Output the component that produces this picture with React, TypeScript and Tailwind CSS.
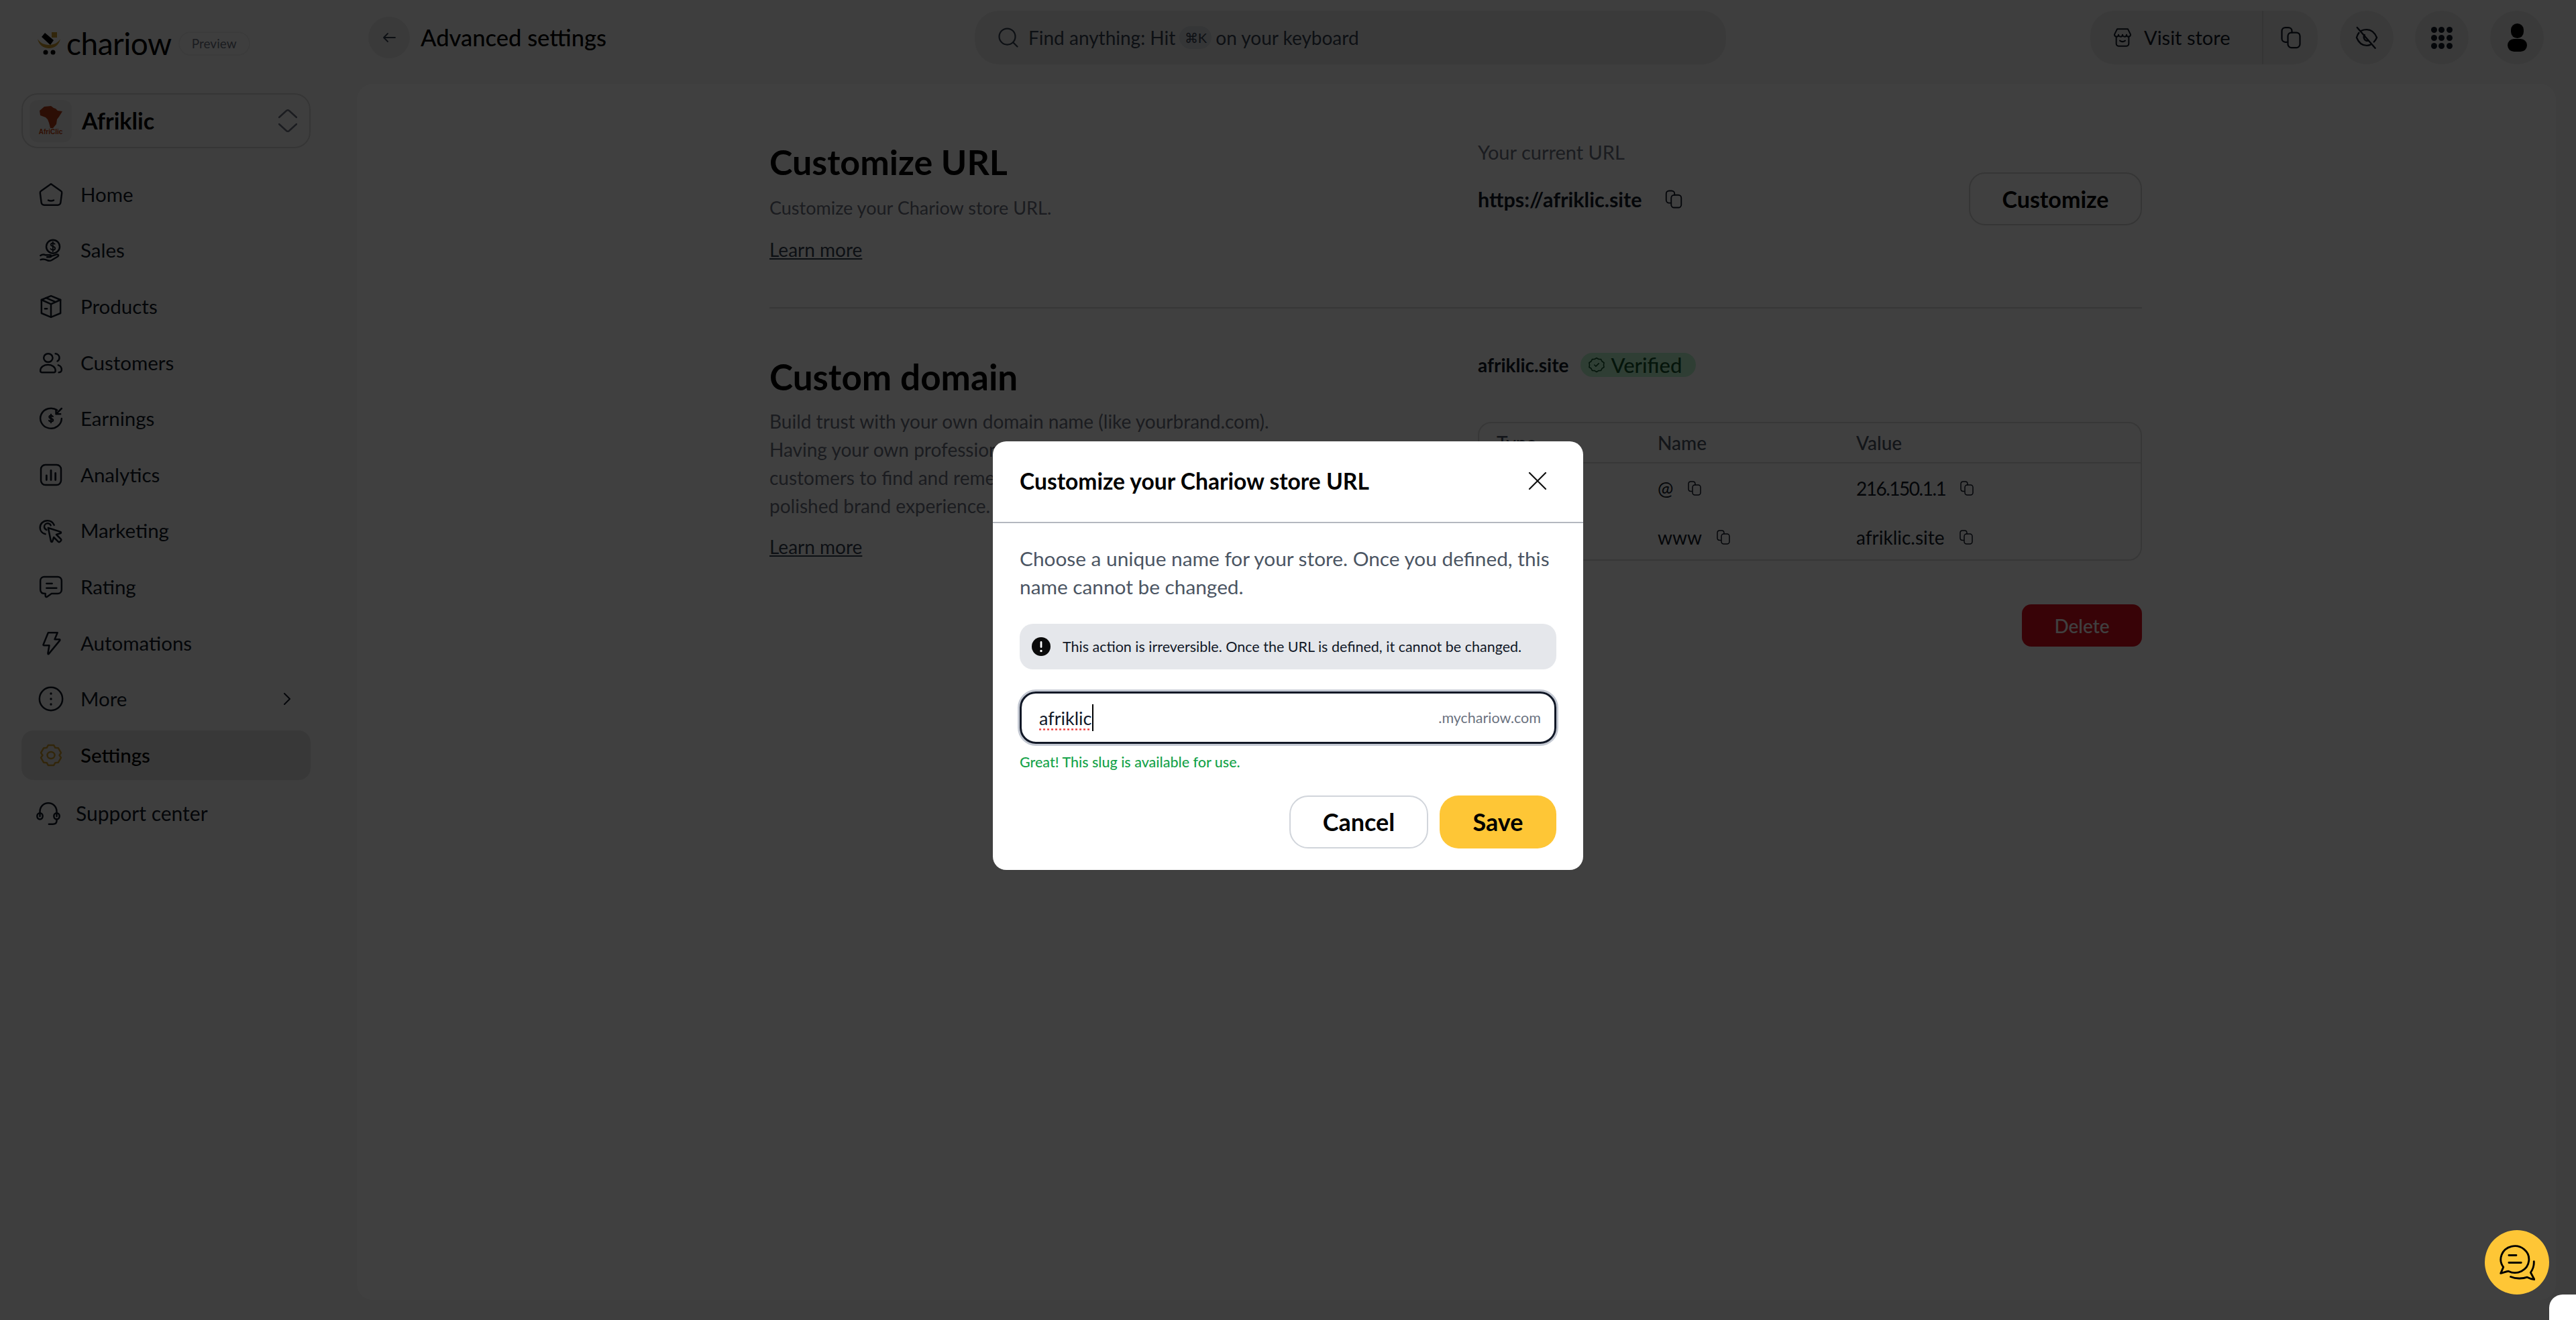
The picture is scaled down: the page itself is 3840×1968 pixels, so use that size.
import React from "react";

const font = { fontFamily: '"Lato", "Noto Sans", sans-serif' };

function Ic({ size = 40, sw = 1.5, className = "", children }: { size?: number; sw?: number; className?: string; children: React.ReactNode }) {
  return (
    <svg width={size} height={size} viewBox="0 0 24 24" fill="none" stroke="currentColor" strokeWidth={sw} strokeLinecap="round" strokeLinejoin="round" className={`shrink-0 ${className}`}>
      {children}
    </svg>
  );
}

const HomeI = () => (
  <Ic>
    <path d="M12 2.600 20.900 8.900c.6.4.9 1.100.8 1.800l-1.100 8.600c-.1 1.200-1.200 2.100-2.400 2.100H5.800c-1.200 0-2.300-.9-2.400-2.100L2.300 10.700c-.1-.7.2-1.400.8-1.800Z" />
    <path d="M9.600 17.200c1.500.6 3.300.6 4.800 0" />
  </Ic>
);
const SalesI = () => (
  <Ic>
    <circle cx="13.800" cy="8.200" r="6" />
    <path d="M15.400 5.900c-.5-.6-1-.9-1.700-.9-1 0-1.800.6-1.800 1.500 0 2.100 3.800 1 3.800 3.200 0 .9-.9 1.500-2 1.500-.8 0-1.500-.4-2-1M13.700 4v8.600" strokeWidth="1.100" />
    <path d="M2.600 16.200c1.400-1.100 3-1.200 4.700-.4h4c1.100 0 1.100 1.700 0 1.700H8.500M11.500 17l5.500-1.800c1.500-.4 2.200 1.100 1 1.900l-5.500 3.300c-1.300.7-2.700.5-3.900 0-1.800-.8-3.600-1.300-5.800-.5" />
  </Ic>
);
const BoxI = () => (
  <Ic>
    <path d="M12 2.500 20.500 6v12L12 21.500 3.500 18V6Z" />
    <path d="M3.500 6 12 9.800 20.500 6M12 9.800v11.700M7.500 4.300l8.500 3.600M6.500 14h2" />
  </Ic>
);
const UsersI = () => (
  <Ic>
    <ellipse cx="9.500" cy="7.500" rx="4" ry="3.800" />
    <path d="M2.500 19c0-3.300 3-5.300 6.800-5.300s6.700 2 6.700 5.300c0 .9-.6 1.500-1.500 1.500H4c-.9 0-1.500-.6-1.500-1.500Z" />
    <path d="M16 3.800c2 .2 3.500 1.800 3.500 3.700 0 1.300-.7 2.400-1.800 3M18.500 14c1.900.6 3 2.200 3 4.200 0 1.300-.8 2.300-2.500 2.300" />
  </Ic>
);
const EarnI = () => (
  <Ic>
    <path d="M17.500 4.500A9.500 9 0 1 0 21.500 12" />
    <path d="M21.500 3 16.500 8M16.500 4v4h4" />
    <path d="M13.700 10.200c-.4-.5-.9-.8-1.600-.8-1 0-1.700.5-1.700 1.300 0 1.800 3.500.9 3.500 2.700 0 .8-.8 1.300-1.800 1.300-.8 0-1.400-.3-1.900-.9M12 8.300v7.400" strokeWidth="1.300" />
  </Ic>
);
const ChartI = () => (
  <Ic>
    <rect x="3" y="3" width="18" height="18" rx="4" />
    <path d="M8 12.500V16.500M12 8v8.500M16 10.500v6" strokeWidth="1.700" />
  </Ic>
);
const ClickI = () => (
  <Ic>
    <path d="M7 14.500C4 13.800 2.200 11.500 2.200 8.800 2.200 5.300 5 2.500 8.800 2.500c2.700 0 5 1.600 6 4" />
    <path d="M8 10.800c-1.200-.5-2-1.600-2-2.800 0-1.700 1.300-3 3-3 1.300 0 2.300.7 2.800 1.800" />
    <path d="m9.500 9 11 3.500c.7.200.7 1.100 0 1.300l-3.700 1.200 4 4c.5.5.5 1.200 0 1.600l-.8.800c-.4.400-1.100.4-1.500 0l-4-4-1.200 3.700c-.2.700-1.100.7-1.300 0Z" />
  </Ic>
);
const RateI = () => (
  <Ic>
    <path d="M6 3h12c2 0 3.500 1.500 3.500 3.500v8c0 2-1.500 3.500-3.500 3.500h-5.500l-4 2.800c-.7.500-1.500 0-1.500-.8V18C4 18 2.500 16.500 2.500 14.500v-8C2.500 4.500 4 3 6 3Z" />
    <path d="M8 9h5M8 13h9" />
  </Ic>
);
const ZapI = () => (
  <Ic>
    <path d="M9.500 2.500h8.300l-2.500 6h4.200c.5 0 .7.600.4 1L10 21.500c-.3.400-.9.100-.8-.3l1.300-7.200h-4.800c-.4 0-.7-.3-.6-.7Z" />
  </Ic>
);
const MoreI = () => (
  <Ic>
    <circle cx="12" cy="12" r="10.300" />
    <path d="M12 7.200v.1M12 12v.1M12 16.800v.1" strokeWidth="2" />
  </Ic>
);
const GearI = () => (
  <Ic>
    <path d="M9.500 3h5l1.300 2.300 2.700.2 2.500 4.300-1.500 2.200 1.500 2.200-2.500 4.300-2.700.2L14.500 21h-5l-1.300-2.300-2.700-.2L3 14.200l1.500-2.200L3 9.800l2.500-4.300 2.700-.2Z" />
    <ellipse cx="12" cy="12" rx="3.300" ry="3" />
  </Ic>
);
const HeadI = () => (
  <Ic>
    <path d="M4.500 14.500V10C4.500 5.800 7.800 2.500 12 2.500S19.500 5.800 19.500 10v4.500" />
    <path d="M4.500 11.500c1.500 0 2.500 1.200 2.500 2.800s-1 2.800-2.500 2.800S2 15.900 2 14.300s1-2.800 2.500-2.800ZM19.500 11.500c1.500 0 2.500 1.200 2.500 2.800s-1 2.800-2.500 2.800-2.500-1.200-2.500-2.800 1-2.800 2.500-2.800Z" />
    <path d="M19.500 17v1.500c0 2-1.500 3-3.500 3h-3.500" />
  </Ic>
);
const CopyI = ({ size = 30 }: { size?: number }) => (
  <Ic size={size} sw={1.500}>
    <path d="M8 16.500H6.500C4.500 16.500 3 15 3 13V5.500C3 3.500 4.500 2 6.500 2h3C11.500 2 13 3.500 13 5.500V7" />
    <rect x="9" y="7" width="12" height="15" rx="3.500" />
  </Ic>
);

const nav: [string, React.ReactNode][] = [
  ["Home", <HomeI />],
  ["Sales", <SalesI />],
  ["Products", <BoxI />],
  ["Customers", <UsersI />],
  ["Earnings", <EarnI />],
  ["Analytics", <ChartI />],
  ["Marketing", <ClickI />],
  ["Rating", <RateI />],
  ["Automations", <ZapI />],
];

function Sidebar() {
  return (
    <aside className="flex h-full w-[532px] shrink-0 flex-col pl-[32px]">
      <div className="flex h-[130px] items-center pl-[23px]">
        <svg width="36" height="36" viewBox="0 0 36 36" className="shrink-0">
          <path d="M1 11c2 9 9 14 17 14s15-5 17-14c-3 5-9 9-17 9S4 16 1 11Z" fill="#c8982c" />
          <path d="M9 6 14 0l13 11-5 7Z" fill="#000" transform="translate(-2 2)" />
          <rect x="22" y="1" width="8" height="8" fill="#c8982c" />
          <circle cx="13" cy="31" r="3.500" fill="#000" />
          <circle cx="24" cy="31" r="3.500" fill="#000" />
        </svg>
        <span className="ml-[8px] text-[46px] leading-none tracking-[-0.5px] text-black">chariow</span>
        <span className="ml-[10px] flex h-[36px] w-[107px] items-center justify-center rounded-full border-2 border-[#ececec] text-[19px] text-[#6b7280]">Preview</span>
      </div>
      <div className="mt-[9px] flex h-[82px] w-[431px] items-center rounded-[24px] border-2 border-[#d4d4d4] pl-[10px] pr-[18px]">
        <div className="flex h-[63px] w-[63px] shrink-0 flex-col items-center justify-center rounded-[12px] bg-[#ececec]">
          <svg width="36" height="34" viewBox="0 0 36 34">
            <path d="M8 1 18 0l4 3 3 1 3 3 7 1-5 8-3 4-1 7-5 6-4 0-2-8-2-5-3-3L2 14 1 7Z" fill="#b13a14" />
          </svg>
          <span className="text-[10px] font-bold leading-none text-[#c2410c]" style={{ fontFamily: '"Liberation Sans", sans-serif' }}>AfriClic</span>
        </div>
        <span className="ml-[15px] flex-1 text-[34px] font-bold leading-none text-black">Afriklic</span>
        <svg width="28" height="34" viewBox="0 0 28 34" fill="none" stroke="#6b7280" strokeWidth="2.500" strokeLinecap="round" strokeLinejoin="round" className="shrink-0">
          <path d="M1 12 12 2c1.200-1 2.800-1 4 0l11 10M1 22l11 10c1.200 1 2.800 1 4 0l11-10" />
        </svg>
      </div>
      <nav className="mt-[32px] flex w-[431px] flex-col gap-[9.600px] text-[29.500px] text-[#111827]">
        {nav.map(([label, icon]) => (
          <div key={label} className="flex h-[74px] items-center gap-[24px] pl-[24px]">
            {icon}
            <span>{label}</span>
          </div>
        ))}
        <div className="flex h-[74px] items-center gap-[24px] pl-[24px] pr-[30px]">
          <MoreI />
          <span className="flex-1">More</span>
          <svg width="10" height="18" viewBox="0 0 10 18" fill="none" stroke="currentColor" strokeWidth="2" strokeLinecap="round" strokeLinejoin="round" className="shrink-0">
            <path d="m1 1 8 8-8 8" />
          </svg>
        </div>
        <div className="flex h-[74px] items-center gap-[24px] rounded-[18px] bg-[#e0e0e0] pl-[24px] font-medium text-black">
          <span className="text-[#c8982c]"><GearI /></span>
          <span>Settings</span>
        </div>
        <div className="mt-[3px] flex h-[74px] items-center gap-[21px] pl-[20px]">
          <HeadI />
          <span className="text-[30px]">Support center</span>
        </div>
      </nav>
    </aside>
  );
}

function Topbar() {
  return (
    <header className="flex h-[125px] shrink-0 items-start pt-[16px]">
      <div className="flex h-[80px] w-[921px] items-center">
        <div className="ml-[17px] flex h-[62px] w-[62px] items-center justify-center rounded-full bg-[#e8e8e8] text-[#374151]">
          <svg width="24" height="24" viewBox="0 0 24 24" fill="none" stroke="currentColor" strokeWidth="1.800" strokeLinecap="round" strokeLinejoin="round"><path d="M21 12H4M10 6l-6 6 6 6" /></svg>
        </div>
        <span className="ml-[16px] text-[34.500px] font-medium text-black">Advanced settings</span>
      </div>
      <div className="flex h-[80px] w-[1120px] items-center rounded-[36px] bg-[#e8e8e8] pl-[32px] text-[28px] text-[#374151]">
        <svg width="36" height="36" viewBox="0 0 24 24" fill="none" stroke="currentColor" strokeWidth="1.500" strokeLinecap="round" className="shrink-0"><circle cx="11" cy="11" r="8" /><path d="m21 21-4-4" /></svg>
        <span className="ml-[12px]">Find anything: Hit</span>
        <span className="mx-[6px] flex h-[34px] w-[48px] items-center justify-center rounded-full bg-[#d1d5db] text-[20px]">⌘K</span>
        <span>on your keyboard</span>
      </div>
      <div className="ml-auto mr-[18px] flex items-center">
        <div className="flex h-[80px] w-[339px] items-center rounded-[36px] bg-[#e8e8e8] text-[#111827]">
          <div className="flex h-full w-[258px] items-center gap-[16px] border-r-2 border-[#d4d4d4] pl-[32px]">
            <Ic size={32}>
              <path d="M5 11v8c0 1.300 1 2.500 2.500 2.500h9c1.500 0 2.500-1.200 2.500-2.500v-8" />
              <path d="M6 2.500h12l3 6c0 1.500-1 2.500-2.300 2.500-1.200 0-2.200-1-2.200-2.200 0 1.200-1 2.200-2.200 2.200S12 10 12 8.800C12 10 11 11 9.800 11s-2.300-1-2.300-2.200C7.500 10 6.500 11 5.300 11 4 11 3 10 3 8.500Z" />
              <path d="M9 15.500c1.800 1.300 4.200 1.300 6 0" />
            </Ic>
            <span className="text-[29px]">Visit store</span>
          </div>
          <div className="flex flex-1 items-center justify-center"><CopyI size={36} /></div>
        </div>
        <div className="ml-[33px] flex h-[80px] w-[80px] items-center justify-center rounded-full bg-[#e8e8e8] text-[#111827]">
          <Ic size={38}>
            <path d="M7 5.500C8.500 4.800 10.200 4.500 12 4.500c4.500 0 7.600 3 9.500 7.500-.7 1.600-1.600 3-2.700 4.100M4.700 7.500C3.700 8.700 3 10.200 2.500 12c1.800 4.500 5 7.500 9.500 7.500 1.300 0 2.500-.3 3.600-.8" />
            <path d="M3 2.500 20 22" />
            <path d="M10 9.500a3.500 3.500 0 0 0 3.500 5.500" />
          </Ic>
        </div>
        <div className="ml-[32px] grid h-[80px] w-[80px] grid-cols-3 content-center justify-items-center gap-y-[3px] rounded-full bg-[#e8e8e8] px-[23px]">
          {Array.from({ length: 9 }).map((_, i) => (
            <span key={i} className="h-[9px] w-[9px] rounded-full bg-[#111827]" />
          ))}
        </div>
        <div className="ml-[32px] flex h-[80px] w-[80px] flex-col items-center justify-center rounded-full bg-[#e8e8e8]">
          <span className="h-[22px] w-[19px] rounded-full bg-black" />
          <span className="mt-[1px] h-[19px] w-[29px] rounded-full bg-black" />
        </div>
      </div>
    </header>
  );
}

function Row({ name, value, tight }: { name: string; value: string; tight?: boolean }) {
  return (
    <div className="flex h-[73px] items-center pl-[266px] text-[28px] text-[#111827]">
      <div className="flex w-[296px] items-center gap-[20px]"><span>{name}</span><CopyI size={24} /></div>
      <div className="flex items-center gap-[20px]"><span className={tight ? "tracking-[-1.500px]" : ""}>{value}</span><CopyI size={24} /></div>
    </div>
  );
}

function Content() {
  return (
    <main className="min-h-0 flex-1 rounded-[24px] bg-white pl-[615px] pr-[617px] pt-[79px]">
      <div className="flex h-[256px] border-b-2 border-[#dcdcdc]">
        <div className="w-[1056px]">
          <h2 className="text-[52px] font-bold leading-[74px] text-black">Customize URL</h2>
          <p className="mt-[14px] text-[27px] leading-[36px] text-[#6b7280]">Customize your Chariow store URL.</p>
          <a className="mt-[26px] block w-fit text-[28px] leading-[36px] text-[#374151] underline">Learn more</a>
        </div>
        <div className="flex flex-1 items-start justify-between pt-[3px]">
          <div>
            <p className="text-[29px] leading-[40px] text-[#6b7280]">Your current URL</p>
            <div className="mt-[30px] flex items-center gap-[32px] text-[30.500px] font-bold leading-[40px] text-[#111827]">
              <span>https://afriklic.site</span>
              <CopyI />
            </div>
          </div>
          <button className="mt-[50px] h-[79px] w-[258px] rounded-[24px] border-2 border-[#d4d4d4] text-[34px] font-bold text-black">Customize</button>
        </div>
      </div>
      <div className="flex pt-[65px]">
        <div className="w-[1056px]">
          <h2 className="text-[53px] font-bold leading-[74px] text-black">Custom domain</h2>
          <p className="mt-[8px] text-[28px] leading-[42px] text-[#6b7280]">
            Build trust with your own domain name (like yourbrand.com).<br />
            Having your own professional domain makes it easier for<br />
            customers to find and remember your store and gives them a<br />
            polished brand experience.
          </p>
          <a className="mt-[22px] block w-fit text-[28px] leading-[36px] text-[#374151] underline">Learn more</a>
        </div>
        <div className="flex-1 pt-[1px]">
          <div className="flex h-[36px] items-center gap-[18px]">
            <span className="text-[28px] font-bold text-[#111827]">afriklic.site</span>
            <span className="flex h-[36px] w-[172px] items-center gap-[8px] rounded-full bg-[#bbf7d0] pl-[11px] text-[31px] font-medium text-[#14532d]">
              <Ic size={26}>
                <path d="M12 2.500l2.800 1.700 3.200.1 1.500 2.900 2.700 1.800-.5 3.200.5 3-2.700 1.700-1.500 2.900-3.200.2L12 21.700 9.200 20l-3.200-.2-1.500-2.900-2.700-1.700.5-3-.5-3.200 2.700-1.800L6 4.300l3.200-.1Z" />
                <path d="m9 12 2 2 4-4" />
              </Ic>
              Verified
            </span>
          </div>
          <div className="mt-[67px] h-[207px] rounded-[20px] border-2 border-[#dcdcdc]">
            <div className="flex h-[60px] items-center border-b-2 border-[#dcdcdc] pl-[26px] text-[28px] font-medium text-[#4b5563]">
              <span className="w-[240px]">Type</span>
              <span className="w-[296px]">Name</span>
              <span>Value</span>
            </div>
            <Row name="@" value="216.150.1.1" tight />
            <Row name="www" value="afriklic.site" />
          </div>
          <div className="mt-[65px] flex justify-end">
            <button className="h-[63px] w-[179px] rounded-[14px] bg-[#e00e1e] text-[28px] font-medium text-white">Delete</button>
          </div>
        </div>
      </div>
    </main>
  );
}

function Modal() {
  return (
    <div className="absolute inset-0 flex items-center justify-center bg-black/75 pb-[13px]">
      <div className="w-[880px] rounded-[20px] bg-white">
        <div className="flex h-[122px] items-center justify-between border-b-2 border-[#b4b8bf] pb-[2px] pl-[40px] pr-[54px]">
          <h3 className="text-[33.600px] font-bold text-black">Customize your Chariow store URL</h3>
          <svg width="28" height="28" viewBox="0 0 28 28" fill="none" stroke="#111" strokeWidth="2.200" strokeLinecap="round"><path d="M2 2l24 24M26 2 2 26" /></svg>
        </div>
        <div className="px-[40px] pt-[32px]">
          <p className="text-[29.800px] leading-[42px] text-[#4b5563]">Choose a unique name for your store. Once you defined, this name cannot be changed.</p>
          <div className="mt-[34px] flex h-[68px] items-center gap-[18px] rounded-[20px] bg-[#e5e7eb] pl-[18px]">
            <svg width="28" height="28" viewBox="0 0 28 28" className="shrink-0">
              <circle cx="14" cy="14" r="14" fill="#0b0b0b" />
              <rect x="12.600" y="6" width="2.800" height="10" rx="1.400" fill="#fff" />
              <circle cx="14" cy="20.500" r="1.700" fill="#fff" />
            </svg>
            <span className="text-[21.500px] text-[#111827]">This action is irreversible. Once the URL is defined, it cannot be changed.</span>
          </div>
          <div className="mt-[33px] flex h-[78px] items-center rounded-[24px] border-[3px] border-[#111827] pl-[26px] pr-[20px] shadow-[0_0_0_3px_#c3c8d2]">
            <span className="text-[27px] leading-none text-[#111827] underline decoration-dotted decoration-[#ef4444] underline-offset-[6px]">afriklic</span>
            <span className="ml-[1px] h-[40px] w-[2px] bg-black" />
            <span className="ml-auto text-[21.500px] text-[#6b7280]">.mychariow.com</span>
          </div>
          <p className="mt-[12px] text-[21.500px] font-medium leading-[30px] text-[#16a34a]">Great! This slug is available for use.</p>
          <div className="mt-[35px] flex justify-end gap-[17px] pb-[32px]">
            <button className="h-[79px] w-[207px] rounded-[28px] border-2 border-[#d1d5db] bg-white pb-[2px] text-[36px] font-bold text-black">Cancel</button>
            <button className="h-[79px] w-[174px] rounded-[28px] bg-[#fec636] pb-[2px] text-[36px] font-bold text-black">Save</button>
          </div>
        </div>
      </div>
    </div>
  );
}

export default function App() {
  return (
    <div className="relative flex h-[1968px] w-[3840px] overflow-hidden bg-[#f8f8f8]" style={font}>
      <Sidebar />
      <div className="flex min-w-0 flex-1 flex-col pb-[30px] pr-[30px]">
        <Topbar />
        <Content />
      </div>
      <Modal />
      <div className="absolute bottom-[38px] right-[40px] flex h-[96px] w-[96px] items-center justify-center rounded-full bg-[#fec636] text-black">
        <Ic size={53} sw={1.300}>
          <path d="M.8 19.200 2.600 15A9.500 9 0 1 1 6 17.800C4.500 17.800 2.500 18.900.8 19.200Z" />
          <path d="M6.300 7h5M6.300 12h8.300" />
          <path d="M23.200 11.200C23.400 13.800 22.500 16.500 21 18.700L23.500 23.300C22 23.200 20.200 22.600 18.700 21.800C15.500 23 11 23 7.500 21.500" />
        </Ic>
      </div>
      <div className="absolute bottom-0 right-0 h-[38px] w-[40px] rounded-tl-[20px] bg-white" />
    </div>
  );
}
